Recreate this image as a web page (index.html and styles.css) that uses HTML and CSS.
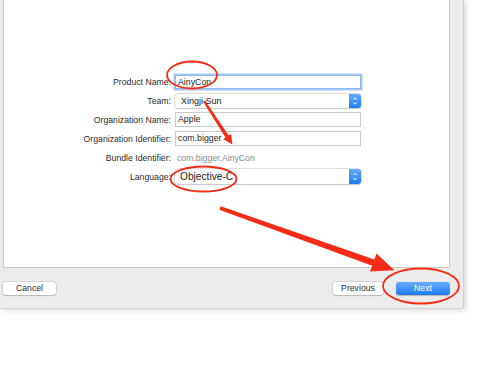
FILE: index.html
```html
<!DOCTYPE html>
<html>
<head>
<meta charset="utf-8">
<link rel="stylesheet" href="styles.css">
</head>
<body>
<div class="window">
  <div class="panel">
    <div class="form">
      <label class="lbl">Product Name:</label>
      <div class="field focus">AinyCon</div>
      <label class="lbl">Team:</label>
      <div class="popup"><span class="ptext">Xingji Sun</span><span class="step"><svg width="12" height="14" viewBox="0 0 12 14"><path d="M4.2 5.6 L6 3.8 L7.8 5.6 M4.2 8.4 L6 10.2 L7.8 8.4" fill="none" stroke="#fff" stroke-width="1"/></svg></span></div>
      <label class="lbl">Organization Name:</label>
      <div class="field">Apple</div>
      <label class="lbl">Organization Identifier:</label>
      <div class="field">com.bigger</div>
      <label class="lbl">Bundle Identifier:</label>
      <div class="value">com.bigger.AinyCon</div>
      <label class="lbl">Language:</label>
      <div class="popup"><span class="ptext big">Objective-C</span><span class="step"><svg width="12" height="15" viewBox="0 0 12 15"><path d="M4.2 6 L6 4.2 L7.8 6 M4.2 9 L6 10.8 L7.8 9" fill="none" stroke="#fff" stroke-width="1"/></svg></span></div>
    </div>
  </div>
  <div class="footer">
    <button class="btn cancel">Cancel</button>
    <div class="spacer"></div>
    <button class="btn prev">Previous</button>
    <button class="btn next">Next</button>
  </div>
</div>
<svg class="marks" width="500" height="369" viewBox="0 0 500 369">
  <g fill="none" stroke="#f42c16" stroke-width="1.8">
    <ellipse cx="192" cy="75" rx="25" ry="13.5"/>
    <ellipse cx="203.5" cy="179" rx="33" ry="12.5"/>
    <ellipse cx="421" cy="286" rx="38" ry="17.5"/>
  </g>
  <g fill="#f42c16">
    <polygon points="205.0,100.4 228.7,135.5 231.0,134.0 232.5,144.5 223.2,139.0 225.5,137.5 203.0,101.6"/>
    <polygon points="220.7,206.2 374.4,259.5 376.5,253.6 394.5,270.2 370.0,271.6 372.2,265.7 219.3,209.8"/>
  </g>
</svg>
</body>
</html>
```

FILE: styles.css
```css
html, body {
  margin: 0;
  padding: 0;
}
body {
  width: 500px;
  height: 369px;
  overflow: hidden;
  background: #fff;
  position: relative;
  font-family: "Liberation Sans", Arial, sans-serif;
  color: #2a2a2a;
}
.window {
  width: 463px;
  height: 308px;
  background: #ececec;
  box-sizing: border-box;
  padding-left: 3px;
  display: flex;
  flex-direction: column;
  box-shadow: 1px 0 0 #cfcfcf, 0 1px 0 #d4d4d4, 2px 2px 6px rgba(0,0,0,0.18);
}
.panel {
  width: 447px;
  height: 268px;
  background: #fff;
  border: 1px solid #c9c9c9;
  border-top: none;
  box-sizing: border-box;
  padding-top: 72px;
}
.form {
  display: grid;
  grid-template-columns: 167px 186px;
  column-gap: 4px;
  grid-auto-rows: 19px;
  align-items: center;
}
.lbl {
  text-align: right;
  font-size: 8.7px;
  color: #2c2c2c;
  white-space: nowrap;
}
.field {
  height: 15px;
  box-sizing: border-box;
  border: 1px solid #cbcbcb;
  background: #fff;
  font-size: 8.8px;
  line-height: 13px;
  padding-left: 2px;
  color: #1e1e1e;
}
.field.focus {
  border-color: #8fb8f0;
  box-shadow: 0 0 0 1.5px #a8c8f4;
  height: 14px;
  line-height: 12px;
}
.popup {
  height: 14px;
  box-sizing: border-box;
  border-radius: 3px;
  background: #fff;
  box-shadow: 0 0 0 0.5px #c4c4c4, 0 0.5px 1px rgba(0,0,0,0.2);
  display: flex;
  align-items: center;
  justify-content: space-between;
}
.popup:last-child {
  height: 15px;
}
.ptext {
  padding-left: 6px;
  font-size: 9px;
  color: #1e1e1e;
}
.ptext.big {
  font-size: 10.2px;
  padding-left: 5px;
}
.step {
  width: 12px;
  height: 100%;
  border-radius: 0 3px 3px 0;
  background: linear-gradient(#64acfb, #1c7bf6);
  display: flex;
}
.value {
  font-size: 8.7px;
  color: #8a8a8a;
  padding-left: 2px;
}
.footer {
  width: 447px;
  display: flex;
  padding-top: 14px;
}
.spacer {
  flex: 1;
}
.btn {
  height: 13px;
  padding: 0;
  border: none;
  border-radius: 3px;
  background: #fff;
  box-shadow: 0 0 0 0.5px #c2c2c2, 0 0.5px 1px rgba(0,0,0,0.25);
  font-family: "Liberation Sans", Arial, sans-serif;
  font-size: 8.7px;
  line-height: 13px;
  color: #2c2c2c;
  text-align: center;
}
.cancel {
  width: 53px;
}
.prev {
  width: 50px;
}
.next {
  width: 54px;
  margin-left: 13px;
  background: linear-gradient(#69adfa, #1d7cf6);
  color: #fff;
  box-shadow: 0 0.5px 1px rgba(0,0,0,0.25);
}
.marks {
  position: absolute;
  left: 0;
  top: 0;
  pointer-events: none;
}
```
